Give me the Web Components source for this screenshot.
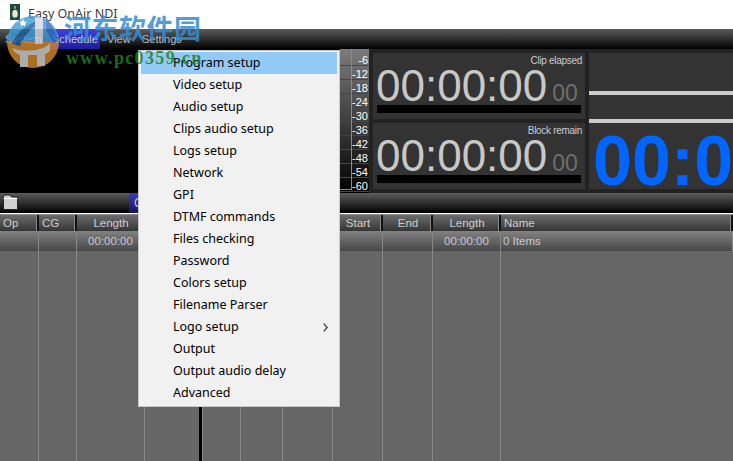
<!DOCTYPE html>
<html>
<head>
<meta charset="utf-8">
<title>Easy OnAir NDI</title>
<style>
  html, body { margin: 0; padding: 0; background: #fff; }
  body { width: 733px; height: 461px; overflow: hidden; position: relative; font-family: "Liberation Sans", Arial, sans-serif; }
</style>
</head>
<body>
  <title-bar>Easy OnAir NDI</title-bar>
  <menu-bar></menu-bar>
  <top-panel>
    <meter-strip></meter-strip>
    <div style="display:flex;flex-direction:column;gap:4px">
      <time-card label="Clip elapsed"></time-card>
      <time-card label="Block remain"></time-card>
    </div>
    <big-clock>00:00:00</big-clock>
  </top-panel>
  <tab-strip></tab-strip>
  <play-list></play-list>
  <popup-menu></popup-menu>
  <water-mark></water-mark>

<script>
class TitleBar extends HTMLElement {
  constructor() {
    super();
    this.attachShadow({ mode: 'open' });
    this.shadowRoot.innerHTML = `
      <style>
        :host { display: flex; align-items: center; gap: 8px; height: 29px; padding: 0 0 3px 10px; box-sizing: border-box; background: #fff; color: #3c3c3c; font: 12.5px "Noto Sans", sans-serif; }
        svg { display: block; margin-bottom: 3px; }
      </style>
      <svg width="10" height="16" viewBox="0 0 10 16">
        <rect width="10" height="16" fill="#1d4a3a"/>
        <path d="M5 2v3M3.6 6.5C2.6 8 2.4 11.5 3.4 13h3.2C7.6 11.5 7.4 8 6.4 6.5z" fill="#e8e8d8" stroke="#e8e8d8"/>
      </svg>
      <slot></slot>
    `;
  }
}
customElements.define('title-bar', TitleBar);

class MenuBar extends HTMLElement {
  constructor() {
    super();
    this.attachShadow({ mode: 'open' });
    this.shadowRoot.innerHTML = `
      <style>
        :host { display: flex; height: 20px; padding-left: 5px; background: linear-gradient(#5c5c5c, #000); color: #bdbdbd; font: 11px "Liberation Sans", sans-serif; line-height: 20px; }
        .on { width: 50px; margin-left: 7px; padding-left: 2px; box-sizing: border-box; background: linear-gradient(#4040d8, #1c1ca0); color: #ccc; }
      </style>
      <span style="width:38px">System</span>
      <span class="on">Schedule</span>
      <span style="width:35px;margin-left:7px">View</span>
      <span>Settings</span>
    `;
  }
}
customElements.define('menu-bar', MenuBar);

class TopPanel extends HTMLElement {
  constructor() {
    super();
    this.attachShadow({ mode: 'open' });
    this.shadowRoot.innerHTML = `
      <style>
        :host { display: flex; height: 144px; background: #222; box-sizing: border-box; overflow: hidden; }
        .video { width: 340px; background: #000; flex: none; }
        ::slotted(meter-strip) { margin-right: 4px; }
        ::slotted(div) { padding: 4px 4px 4px 0; }
      </style>
      <div class="video"></div>
      <slot></slot>
    `;
  }
}
customElements.define('top-panel', TopPanel);

class MeterStrip extends HTMLElement {
  constructor() {
    super();
    this.attachShadow({ mode: 'open' });
    const rows = [-6, -12, -18, -24, -30, -36, -42, -48, -54, -60]
      .map(n => `<div class="row">${n}</div>`).join('');
    this.shadowRoot.innerHTML = `
      <style>
        :host { display: block; position: relative; flex: none; width: 29px; height: 144px; padding-top: 3px; box-sizing: border-box; background: linear-gradient(#7c7c7c, #000); color: #fff; font: 11px "Liberation Sans", sans-serif; }
        .row { height: 14px; box-sizing: border-box; border-bottom: 1px solid #3c3c96; text-align: right; padding: 2px 1px 0 0; line-height: 12px; }
        .box { position: absolute; left: 0; top: 0; width: 12px; height: 141px; box-sizing: border-box; border-right: 1px solid #8a8a8a; border-bottom: 1px solid #8a8a8a; }
      </style>
      ${rows}
      <div class="box"></div>
    `;
  }
}
customElements.define('meter-strip', MeterStrip);

class TimeCard extends HTMLElement {
  constructor() {
    super();
    this.attachShadow({ mode: 'open' });
    this.shadowRoot.innerHTML = `
      <style>
        :host { display: block; width: 212px; height: 66px; box-sizing: border-box; padding: 0 4px; background: #333; font-family: "Liberation Sans", sans-serif; }
        .label { text-align: right; font-size: 10px; letter-spacing: -.3px; line-height: 13px; color: #ccc; padding: 1px 0 0; margin-right: -1px; }
        .time { display: flex; align-items: baseline; height: 38px; line-height: 38px; font-size: 44px; color: #c8c8c8; margin-left: -1px; }
        .frames { font-size: 23px; color: #6e6e6e; margin-left: 5px; }
        .bar { height: 8px; background: #000; }
      </style>
      <div class="label"></div>
      <div class="time">00:00:00<span class="frames">00</span></div>
      <div class="bar"></div>
    `;
    this.shadowRoot.querySelector('.label').textContent = this.getAttribute('label');
  }
}
customElements.define('time-card', TimeCard);

class BigClock extends HTMLElement {
  constructor() {
    super();
    this.attachShadow({ mode: 'open' });
    this.shadowRoot.innerHTML = `
      <style>
        :host { display: block; flex: 1; min-width: 0; margin: 4px 0; background: #333; overflow: hidden; padding-top: 38px; box-sizing: border-box; }
        .line { height: 4px; background: #ccc; margin-bottom: 24px; }
        .time { margin-left: 4px; margin-top: -24px; font: bold 70px/70px "Liberation Sans", sans-serif; color: #0066ff; white-space: nowrap; padding-top: 3px; }
      </style>
      <div class="line"></div>
      <div class="line"></div>
      <div class="time"><slot></slot></div>
    `;
  }
}
customElements.define('big-clock', BigClock);

class TabStrip extends HTMLElement {
  constructor() {
    super();
    this.attachShadow({ mode: 'open' });
    this.shadowRoot.innerHTML = `
      <style>
        :host { display: flex; height: 20px; align-items: center; background: linear-gradient(#5c5c5c, #000); color: #ccc; font: 12px "Liberation Sans", sans-serif; }
        svg { display: block; margin: 0 0 2px 3px; flex: none; }
        .tab { margin-left: 110px; align-self: stretch; width: 80px; padding-left: 5px; line-height: 20px; background: linear-gradient(#3b3bbd, #15155c); }
      </style>
      <svg width="16" height="16" viewBox="0 0 16 16">
        <path d="M.5 15.5V2.5L2 1h5l1.5 2h6v12.5z" fill="#d2d2d2" stroke="#222"/>
        <path d="M.5 4.5h14" stroke="#fff"/>
      </svg>
      <div class="tab">CG</div>
    `;
  }
}
customElements.define('tab-strip', TabStrip);

class PlayList extends HTMLElement {
  constructor() {
    super();
    this.attachShadow({ mode: 'open' });
    const widths = [39, 38, 68, 57, 39, 42, 50, 50, 50, 68];
    const cols = widths.map(w => w + 'px').join(' ') + ' 1fr';
    const head = [['Op', 'left'], ['CG', 'left'], ['Length'], [''], [''], [''], [''], ['Start'], ['End'], ['Length'], ['Name', 'left']];
    const data = ['', '', '00:00:00', '', '', '', '', '', '', '00:00:00', '0 Items'];
    this.shadowRoot.innerHTML = `
      <style>
        :host { display: block; height: 248px; background: #666; margin-top: 1px; border-top: 1px solid #8c8c8c; box-sizing: border-box; font: 11.5px "Liberation Sans", sans-serif; color: #ccc; }
        .grid { display: grid; grid-template-columns: ${cols}; }
        .head { height: 16px; line-height: 16px; }
        .head div { background: linear-gradient(#6c6c6c, #353535); border-right: 2px solid #111; box-shadow: inset -1px 0 #888; text-align: center; padding-left: 2px; box-sizing: border-box; overflow: hidden; }
        .head .left { text-align: left; padding-left: 3px; }
        .row { height: 20px; line-height: 20px; }
        .row div { background: linear-gradient(#828282, #474747); border-right: 1px solid #888; box-sizing: border-box; text-align: center; color: #c8c8d8; }
        .row .left { text-align: left; padding-left: 2px; }
        .rest { height: 210px; }
        .rest div { border-right: 1px solid #888; box-sizing: border-box; }
        .rest .cut { border-right: 3px solid #000; box-shadow: 1px 0 #888; }
      </style>
      <div class="grid head">${head.map(([t, c]) => `<div class="${c || ''}">${t}</div>`).join('')}</div>
      <div class="grid row">${data.map(t => `<div class="${t === '0 Items' ? 'left' : ''}">${t}</div>`).join('')}</div>
      <div class="grid rest">${widths.map((w, i) => `<div class="${i === 3 ? 'cut' : ''}"></div>`).join('')}<div style="border:0"></div></div>
    `;
  }
}
customElements.define('play-list', PlayList);

class PopupMenu extends HTMLElement {
  constructor() {
    super();
    this.attachShadow({ mode: 'open' });
    const items = ['Program setup', 'Video setup', 'Audio setup', 'Clips audio setup', 'Logs setup', 'Network', 'GPI',
      'DTMF commands', 'Files checking', 'Password', 'Colors setup', 'Filename Parser', 'Logo setup', 'Output',
      'Output audio delay', 'Advanced'];
    this.shadowRoot.innerHTML = `
      <style>
        :host { display: block; position: absolute; left: 138px; top: 50px; width: 202px; height: 357px; box-sizing: border-box; padding: 1px 2px 2px; background: #f1f1f1; border: 1px solid #c8c8c8; color: #000; font: 12.5px "Noto Sans", sans-serif; }
        .item { display: flex; justify-content: space-between; align-items: center; height: 22px; padding: 0 9px 0 32px; box-sizing: border-box; }
        .item span { margin-top: -2px; }
        .item.on { background: #91c9f7; }
        svg { display: block; }
      </style>
      ${items.map((t, i) => `<div class="item${i === 0 ? ' on' : ''}"><span>${t}</span>${t === 'Logo setup'
        ? '<svg width="5" height="9" viewBox="0 0 5 9"><path d="M.7.7 4.2 4.5.7 8.3" fill="none" stroke="#333" stroke-width="1.2"/></svg>' : ''}</div>`).join('')}
    `;
  }
}
customElements.define('popup-menu', PopupMenu);

class WaterMark extends HTMLElement {
  constructor() {
    super();
    this.attachShadow({ mode: 'open' });
    this.shadowRoot.innerHTML = `
      <style>
        :host { display: block; position: absolute; left: 0; top: 0; width: 240px; height: 72px; pointer-events: none; }
        svg { position: absolute; left: 0; top: 8px; opacity: .8; }
        .cn { position: absolute; left: 64px; top: 12px; font: bold 27px/32px "Noto Sans CJK SC", sans-serif; letter-spacing: .5px; color: rgba(52, 140, 210, .85); white-space: nowrap; }
        .url { position: absolute; left: 66px; top: 48px; font: bold 18px/20px "Liberation Serif", serif; letter-spacing: 1.35px; color: rgba(30, 130, 30, .85); white-space: nowrap; }
      </style>
      <svg width="64" height="62" viewBox="0 0 64 62">
        <path d="M7 34a26 26 0 0 1 52 0z" fill="#3f9bdc"/>
        <path d="M7 34a26 26 0 0 0 52 0z" fill="#d98a2e"/>
        <path d="M12 36C18 22 30 14 46 10 34 18 24 26 20 38z" fill="#1f5f9c"/>
        <path d="M35 9h8v27h-8z" fill="#d8d8e4"/>
        <path d="M46 8l12 22-4 6-8-14z" fill="#2b6fc0"/>
        <path d="M12 40c8 4 32 4 38-5v8c-4 3-7 4-5 4v11h-8V47H28v12h-8V47c-3-1-6-3-8-7z" fill="#d6d6d6"/>
        <path d="M23 11l1.2 2.6 2.8.3-2.1 1.9.6 2.8-2.5-1.5-2.5 1.5.6-2.8-2.1-1.9 2.8-.3z" fill="#fff"/>
      </svg>
      <div class="cn">河东软件园</div>
      <div class="url">www.pc0359.cn</div>
    `;
  }
}
customElements.define('water-mark', WaterMark);
</script>
</body>
</html>
